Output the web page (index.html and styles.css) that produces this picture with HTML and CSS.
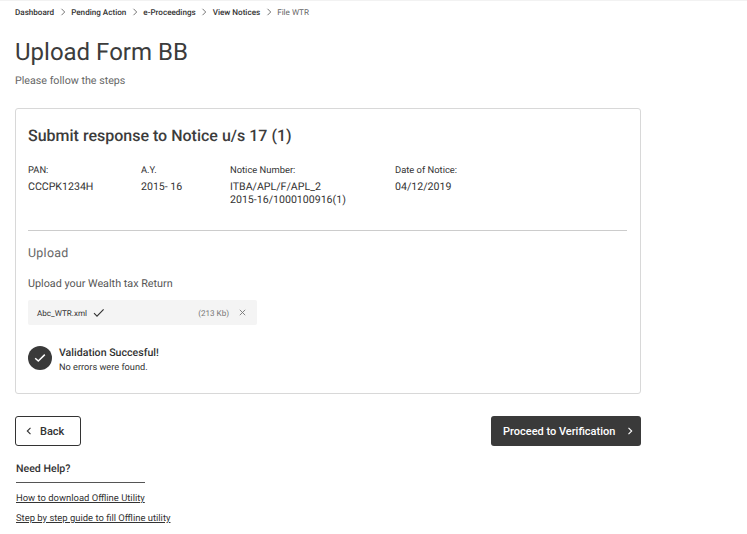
FILE: index.html
```html
<!DOCTYPE html>
<html lang="en">
<head>
    <meta charset="UTF-8">
    <meta name="viewport" content="width=device-width, initial-scale=1.0">
    <title>Upload Form BB</title>
    <link rel="stylesheet" href="styles.css">
</head>
<body>
    <nav class="breadcrumb">
        <a href="#">Dashboard</a>
        <svg class="crumb-arrow" width="6" height="8" viewBox="0 0 6 8"><path d="M1.5 .8 4.7 4 1.5 7.2"/></svg>
        <a href="#">Pending Action</a>
        <svg class="crumb-arrow" width="6" height="8" viewBox="0 0 6 8"><path d="M1.5 .8 4.7 4 1.5 7.2"/></svg>
        <a href="#">e-Proceedings</a>
        <svg class="crumb-arrow" width="6" height="8" viewBox="0 0 6 8"><path d="M1.5 .8 4.7 4 1.5 7.2"/></svg>
        <a href="#">View Notices</a>
        <svg class="crumb-arrow" width="6" height="8" viewBox="0 0 6 8"><path d="M1.5 .8 4.7 4 1.5 7.2"/></svg>
        <span class="crumb-current">File WTR</span>
    </nav>

    <main class="container">
        <h1>Upload Form BB</h1>
        <p class="subtitle">Please follow the steps</p>

        <section class="card">
            <h2>Submit response to Notice u/s 17 (1)</h2>

            <div class="details">
                <div class="detail detail-pan">
                    <div class="detail-label">PAN:</div>
                    <div class="detail-value">CCCPK1234H</div>
                </div>
                <div class="detail detail-ay">
                    <div class="detail-label">A.Y.</div>
                    <div class="detail-value">2015- 16</div>
                </div>
                <div class="detail detail-notice">
                    <div class="detail-label">Notice Number:</div>
                    <div class="detail-value">ITBA/APL/F/APL_2<br>2015-16/1000100916(1)</div>
                </div>
                <div class="detail">
                    <div class="detail-label">Date of Notice:</div>
                    <div class="detail-value">04/12/2019</div>
                </div>
            </div>

            <h3>Upload</h3>
            <p class="upload-label">Upload your Wealth tax Return</p>

            <div class="file-row">
                <span class="file-name">Abc_WTR.xml</span>
                <svg class="file-check" width="12" height="10" viewBox="0 0 12 10"><path d="M1 5.2 4 8.2 10.6 1.4"/></svg>
                <span class="file-size">(213 Kb)</span>
                <svg class="file-remove" width="7" height="7" viewBox="0 0 7 7"><path d="M.8 .8 6.2 6.2M6.2 .8 .8 6.2"/></svg>
            </div>

            <div class="validation">
                <div class="validation-icon">
                    <svg width="12" height="10" viewBox="0 0 12 10"><path d="M1.2 5.2 4.3 8 10.8 1.6"/></svg>
                </div>
                <div>
                    <div class="validation-title">Validation Succesful!</div>
                    <div class="validation-text">No errors were found.</div>
                </div>
            </div>
        </section>

        <div class="actions">
            <button class="btn btn-back">
                <svg width="6" height="8" viewBox="0 0 6 8"><path d="M4.5 .8 1.3 4 4.5 7.2"/></svg>
                Back
            </button>
            <button class="btn btn-next">
                Proceed to Verification
                <svg width="6" height="8" viewBox="0 0 6 8"><path d="M1.5 .8 4.7 4 1.5 7.2"/></svg>
            </button>
        </div>

        <div class="help">
            <h4>Need Help?</h4>
            <a href="#">How to download Offline Utility</a>
            <a href="#">Step by step guide to fill Offline utility</a>
        </div>
    </main>
</body>
</html>
```

FILE: styles.css
```css
body {
    font-family: 'Roboto', sans-serif;
    background-color: white;
    color: #333;
    margin: 0;
    padding: 0;
    overflow: hidden;
    text-rendering: geometricPrecision;
}
.breadcrumb {
    display: flex;
    align-items: center;
    height: 23px;
    padding: 0 0 0 15px;
    border-top: 1px solid #f2f2f2;
    box-sizing: border-box;
    font-size: 8.1px;
    font-weight: 500;
}
.breadcrumb a {
    color: #333;
    text-decoration: none;
}
.crumb-arrow {
    margin: 0 5.5px;
    fill: none;
    stroke: #666;
    stroke-width: 0.9;
}
.crumb-current {
    color: #666;
    font-weight: 400;
}
.container {
    width: 626px;
    margin-left: 15px;
}
h1 {
    font-size: 24px;
    font-weight: 400;
    line-height: 28px;
    color: #3c3c3c;
    margin: 15px 0 0 0;
}
.subtitle {
    font-size: 10.7px;
    line-height: 12px;
    color: #666;
    margin: 9px 0 0 0;
}
.card {
    height: 286px;
    margin-top: 21px;
    padding: 0 13px 0 12px;
    border: 1px solid #d8d8d8;
    border-radius: 3px;
    box-sizing: border-box;
}
h2 {
    font-size: 16px;
    font-weight: 500;
    line-height: 20px;
    color: #3c3c3c;
    margin: 17px 0 0 0;
}
.details {
    display: flex;
    height: 65px;
    margin-top: 19px;
    border-bottom: 1px solid #ccc;
}
.detail-pan {
    width: 113px;
}
.detail-ay {
    width: 89px;
}
.detail-notice {
    width: 165px;
}
.detail-label {
    font-size: 9.4px;
    line-height: 12px;
}
.detail-value {
    font-size: 10.6px;
    line-height: 13px;
    margin-top: 3px;
}
h3 {
    font-size: 12.4px;
    font-weight: 400;
    line-height: 14px;
    letter-spacing: 0.3px;
    color: #666;
    margin: 16px 0 0 0;
}
.upload-label {
    font-size: 10.8px;
    line-height: 12px;
    color: #555;
    margin: 17px 0 0 0;
}
.file-row {
    display: flex;
    align-items: center;
    width: 229px;
    height: 25px;
    margin-top: 10px;
    padding: 0 11px 0 9px;
    box-sizing: border-box;
    background-color: #f4f4f4;
    border-radius: 2px;
    font-size: 8.1px;
}
.file-check {
    margin-left: 6px;
    fill: none;
    stroke: #333;
    stroke-width: 1.1;
}
.file-size {
    margin-left: auto;
    color: #777;
}
.file-remove {
    margin-left: 10px;
    fill: none;
    stroke: #777;
    stroke-width: 0.9;
}
.validation {
    display: flex;
    align-items: flex-start;
    margin-top: 21px;
}
.validation-icon {
    display: flex;
    align-items: center;
    justify-content: center;
    width: 24px;
    height: 24px;
    margin-right: 7px;
    background-color: #3a3a3a;
    border-radius: 50%;
}
.validation-icon svg {
    fill: none;
    stroke: white;
    stroke-width: 1.5;
}
.validation-title {
    font-size: 10.6px;
    font-weight: 500;
    line-height: 13px;
}
.validation-text {
    font-size: 9.2px;
    line-height: 12px;
    margin-top: 3px;
}
.actions {
    display: flex;
    justify-content: space-between;
    margin-top: 22px;
}
.btn {
    display: flex;
    align-items: center;
    height: 30px;
    font-family: 'Roboto', sans-serif;
    font-size: 11px;
    font-weight: 500;
    border-radius: 3px;
    box-sizing: border-box;
    cursor: pointer;
}
.btn svg {
    fill: none;
    stroke-width: 1.1;
}
.btn-back {
    width: 66px;
    padding: 0 0 0 10px;
    gap: 8px;
    background-color: white;
    color: #333;
    border: 1px solid #333;
}
.btn-back svg {
    stroke: #333;
}
.btn-next {
    width: 150px;
    padding: 0 8px 0 12px;
    justify-content: space-between;
    background-color: #3a3a3a;
    color: white;
    border: none;
}
.btn-next svg {
    stroke: white;
}
.help {
    margin: 17px 0 0 1px;
}
h4 {
    width: 129px;
    height: 19px;
    margin: 0;
    border-bottom: 1px solid #555;
    font-size: 10.6px;
    font-weight: 500;
    line-height: 12px;
}
.help a {
    display: block;
    width: fit-content;
    margin-top: 9px;
    font-size: 9.45px;
    font-weight: 400;
    line-height: 11px;
    color: #333;
}
.help h4 + a {
    margin-top: 10px;
}
```
